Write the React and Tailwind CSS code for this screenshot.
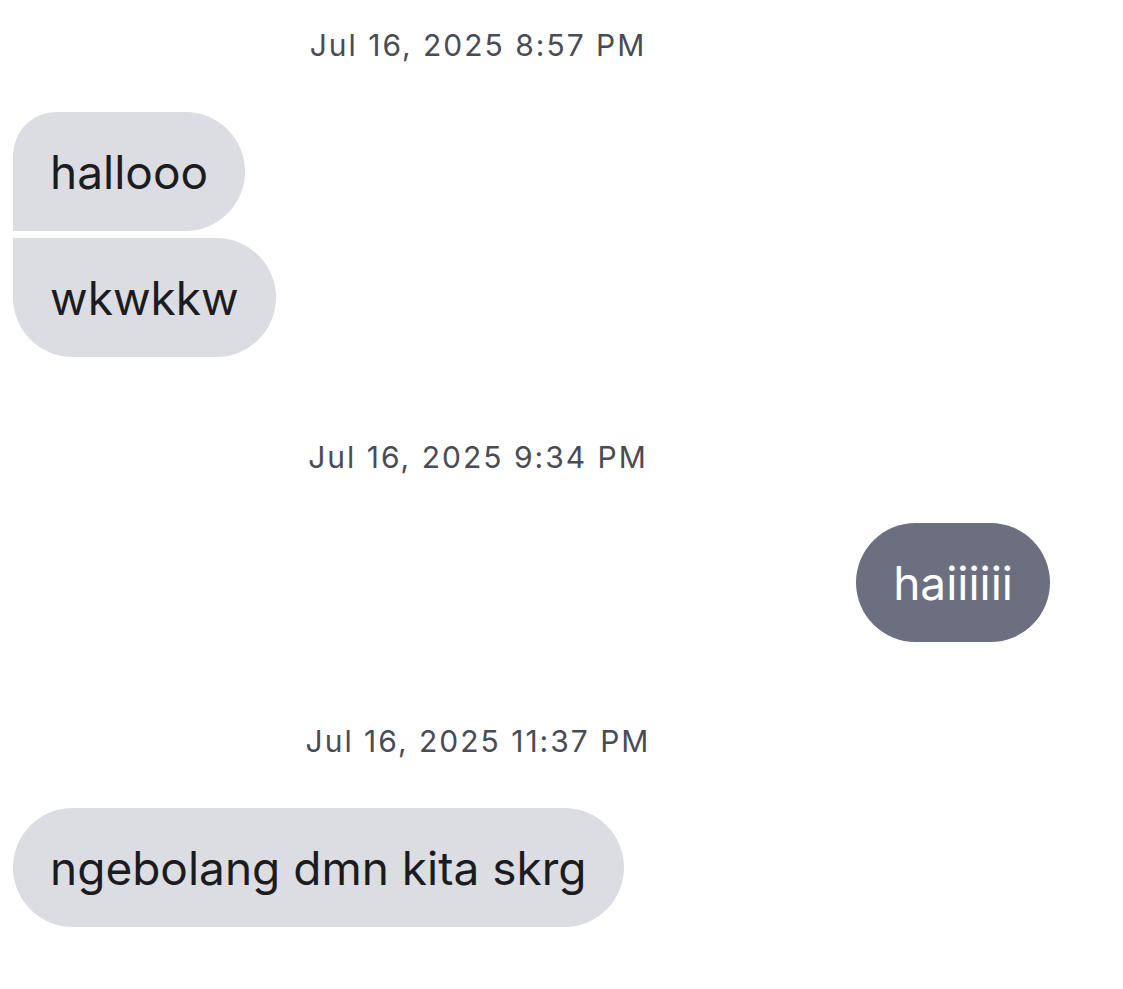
import React from 'react';

const font = { fontFamily: 'Inter, "Noto Sans", sans-serif' };

function Stamp({ children, className = '' }) {
  return (
    <div className={`flex w-[956px] justify-center h-[40px] items-center text-[30px] tracking-[2px] text-[#4a4b55] ${className}`}>
      {children}
    </div>
  );
}

function Bubble({ children, className = '' }) {
  return (
    <div className={`h-[119px] flex items-center px-[37px] text-[46px] leading-none ${className}`}>
      {children}
    </div>
  );
}

export default function App() {
  return (
    <div className="w-[1123px] h-[989px] bg-white flex flex-col pt-[25px]" style={font}>
      <Stamp>Jul 16, 2025 8:57 PM</Stamp>

      {/* first group */}
      <div className="flex flex-col items-start gap-[7px] pl-[13px] mt-[47px]">
        <Bubble className="bg-[#dcdde2] text-[#1c1c1f] rounded-r-[60px] rounded-tl-[44px]">hallooo</Bubble>
        <Bubble className="bg-[#dcdde2] text-[#1c1c1f] rounded-r-[60px] rounded-bl-[60px]">wkwkkw</Bubble>
      </div>

      <Stamp className="mt-[80px]">Jul 16, 2025 9:34 PM</Stamp>

      <div className="flex justify-end pr-[73px] mt-[46px]">
        <Bubble className="bg-[#6c6f80] text-white rounded-[60px]">haiiiiii</Bubble>
      </div>

      <Stamp className="mt-[79px]">Jul 16, 2025 11:37 PM</Stamp>

      <div className="flex pl-[13px] mt-[47px]">
        <Bubble className="bg-[#dcdde2] text-[#1c1c1f] rounded-[60px]">ngebolang dmn kita skrg</Bubble>
      </div>
    </div>
  );
}
